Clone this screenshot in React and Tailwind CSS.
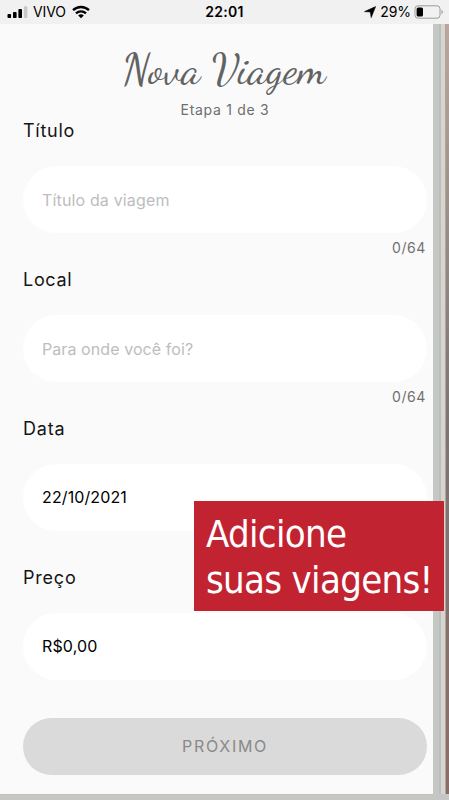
const FIELDS = [
  { label: "Título", text: "Título da viagem", empty: true, counter: "0/64", labelClass: "tracking-[0.75px]", textClass: "tracking-[0.15px]" },
  { label: "Local", text: "Para onde você foi?", empty: true, counter: "0/64", labelClass: "tracking-[0.7px]", textClass: "tracking-[0.08px]" },
  { label: "Data", text: "22/10/2021", labelClass: "tracking-[0.8px]", textClass: "tracking-[0.12px] pb-[2px]" },
  { label: "Preço", text: "R$0,00", labelClass: "tracking-[0.8px]", textClass: "tracking-[0.15px] pb-[2px]" },
];

function StatusBar() {
  return (
    <header className="grid h-6 grid-cols-3 items-center bg-[#f1f1f1] pl-[7px] pr-[5px] text-[14px] leading-6 text-black">
      <div className="flex items-center">
        <svg width="21" height="14" viewBox="0 0 21 14">
          <rect x="0.5" y="9" width="3.6" height="4" rx="0.8" />
          <rect x="6" y="7" width="3.6" height="6" rx="0.8" />
          <rect x="11.4" y="4" width="3.6" height="9" rx="0.8" />
          <rect x="16.8" y="1.2" width="3.6" height="11.8" rx="0.8" fill="#c9c9c9" />
        </svg>
        <span className="ml-[5px] tracking-[-0.1px]">VIVO</span>
        <svg className="ml-[6px]" width="18" height="14" viewBox="0 0 18 14" fill="none" stroke="#000" strokeWidth="2.3">
          <path d="M1 5.2C5.5 0.9 12.5 0.9 17 5.2" />
          <path d="M4 8.4C6.8 5.8 11.2 5.8 14 8.4" />
          <path d="M9 13.3L6.2 10.4C7.8 9 10.2 9 11.8 10.4Z" fill="#000" stroke="none" />
        </svg>
      </div>
      <span className="pr-[2px] text-center font-semibold tracking-[0.3px]">22:01</span>
      <div className="flex items-center justify-end">
        <svg width="12" height="12" viewBox="0 0 12 12">
          <path d="M11.6 0.6L7.2 11.6L6.3 6L0.5 5.6Z" stroke="#000" strokeWidth="0.6" />
        </svg>
        <span className="ml-[4px] tracking-[-0.1px]">29%</span>
        <svg className="ml-[3px]" width="30" height="14" viewBox="0 0 30 14">
          <rect x="1" y="0.8" width="25" height="12.4" rx="3" fill="none" stroke="#9b9b9b" />
          <rect x="2.6" y="2.4" width="6.4" height="9.2" rx="1.6" />
          <path d="M27.5 4.8C29.3 5.6 29.3 8.4 27.5 9.2Z" fill="#9b9b9b" />
        </svg>
      </div>
    </header>
  );
}

function Field({ label, text, empty, counter, labelClass, textClass }) {
  return (
    <div className="flex h-[149px] flex-col">
      <div className={`h-6 text-[18px] leading-6 text-[#151515] ${labelClass}`}>{label}</div>
      <div className={`mt-[23px] flex h-[67px] items-center rounded-[34px] bg-white pl-[19px] text-[16px] ${textClass} ${empty ? "text-[#bdbdbd]" : "text-black"}`}>
        {text}
      </div>
      {counter && <div className="h-[30px] pr-px text-right text-[14px] leading-[30px] tracking-[0.6px] text-[#707070]">{counter}</div>}
    </div>
  );
}

export default function App() {
  return (
    <div className="relative flex h-[800px] w-[449px] flex-col overflow-hidden bg-[#c6c6c4] font-['Inter','Liberation_Sans',sans-serif]">
      <StatusBar />
      <div className="flex h-[770px]">
        <main className="flex w-[433px] flex-col bg-[#fafafa] pl-[23px] pr-[6px]">
          <h1 className="mt-[20px] h-[55px] whitespace-nowrap pr-[2px] text-center font-['Dancing_Script','Liberation_Serif',serif] text-[43px] leading-[50px] text-[#626262]">
            Nova Viagem
          </h1>
          <p className="h-5 text-center text-[14px] leading-[22px] tracking-[0.7px] text-[#6e6e6e]">Etapa 1 de 3</p>
          {FIELDS.map((field) => (
            <Field key={field.label} {...field} />
          ))}
          <button className="mt-[3px] h-[57px] w-[404px] rounded-full bg-[#dadada] pb-[2px] text-[16px] tracking-[1.7px] text-[#898989]">
            PRÓXIMO
          </button>
        </main>
        <div className="w-[6px] bg-[#c5c7c5]" />
        <div className="w-[2px] bg-[#b9bfbe]" />
        <div className="w-[4px] bg-[#d6d5ce]" />
        <div className="w-[1px] bg-[#b5a29c]" />
        <div className="flex-1 bg-linear-to-b from-[#b9a7a0] via-[#7b7774] to-[#8a6d69]" />
      </div>
      <div className="h-px w-[433px] bg-[#cbbfbd]" />
      <div className="absolute left-[194px] top-[501px] h-[110px] w-[250px] whitespace-nowrap bg-[#c22331] pl-[12px] pt-[10px] font-['DejaVu_Sans_Condensed','DejaVu_Sans',sans-serif] text-[38px] leading-[46px] tracking-[-0.7px] text-white">
        Adicione
        <br />
        suas viagens!
      </div>
    </div>
  );
}
